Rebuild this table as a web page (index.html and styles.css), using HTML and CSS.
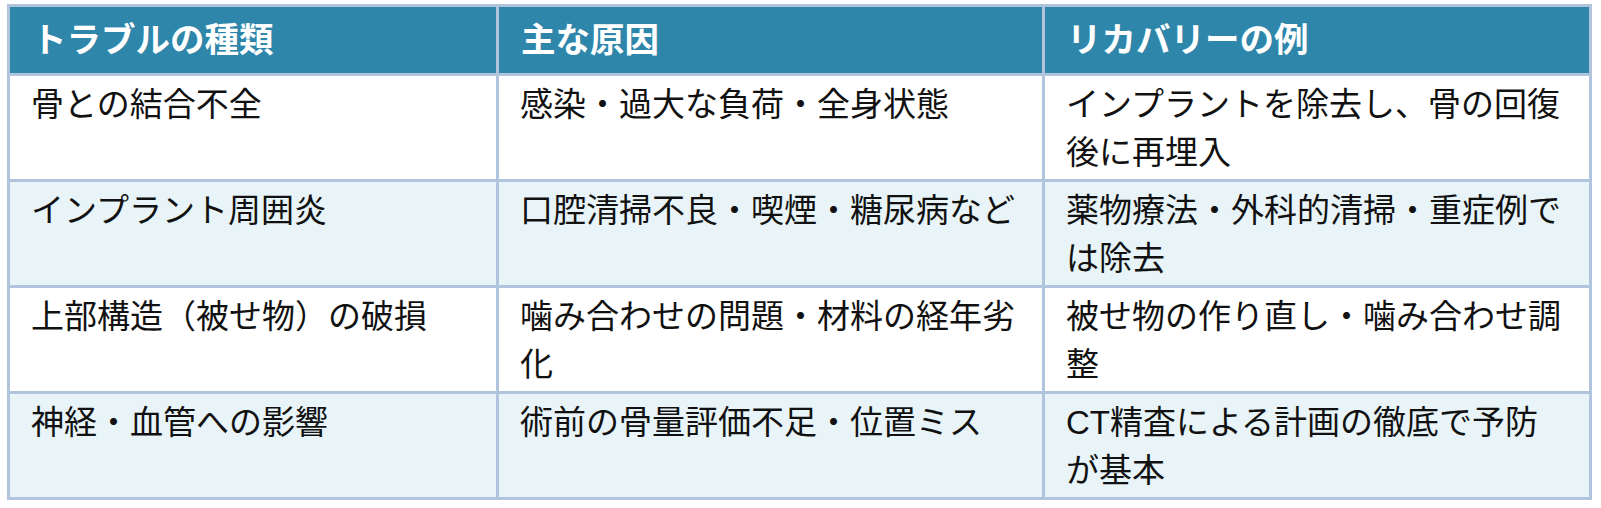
FILE: index.html
```html
<!DOCTYPE html>
<html lang="ja">
<head>
<meta charset="utf-8">
<title>インプラントのトラブル</title>
<link rel="stylesheet" href="styles.css">
</head>
<body>
<table class="trouble-table">
  <thead>
    <tr>
      <th class="col-type">トラブルの種類</th>
      <th class="col-cause">主な原因</th>
      <th class="col-recovery">リカバリーの例</th>
    </tr>
  </thead>
  <tbody>
    <tr>
      <td>骨との結合不全</td>
      <td>感染・過大な負荷・全身状態</td>
      <td>インプラントを除去し、骨の回復後に再埋入</td>
    </tr>
    <tr class="shaded">
      <td>インプラント周囲炎</td>
      <td>口腔清掃不良・喫煙・糖尿病など</td>
      <td>薬物療法・外科的清掃・重症例では除去</td>
    </tr>
    <tr>
      <td>上部構造（被せ物）の破損</td>
      <td>噛み合わせの問題・材料の経年劣化</td>
      <td>被せ物の作り直し・噛み合わせ調整</td>
    </tr>
    <tr class="shaded">
      <td>神経・血管への影響</td>
      <td>術前の骨量評価不足・位置ミス</td>
      <td>CT精査による計画の徹底で予防が基本</td>
    </tr>
  </tbody>
</table>
</body>
</html>
```
FILE: styles.css
```css
html, body {
  margin: 0;
  background: #ffffff;
}
body {
  padding: 4px 0 0 7px;
  font-family: "Liberation Sans", "Noto Sans CJK JP", sans-serif;
  font-size: 33px;
  line-height: 48px;
  color: #111111;
}
.trouble-table {
  width: 1585px;
  table-layout: fixed;
  border-collapse: separate;
  border-spacing: 0;
  border-top: 3px solid #b0c4de;
  border-left: 3px solid #b0c4de;
}
.trouble-table th,
.trouble-table td {
  box-sizing: border-box;
  border-right: 3px solid #b0c4de;
  border-bottom: 3px solid #b0c4de;
  text-align: left;
  vertical-align: top;
}
.trouble-table th {
  background: #2e86ab;
  color: #ffffff;
  font-size: 34.5px;
  font-weight: 700;
  padding: 9px 21px 9px 22px;
}
.trouble-table td {
  padding: 5px 21px 2px 21px;
  font-weight: 400;
}
.col-type { width: 489px; }
.col-cause { width: 546px; }
.col-recovery { width: 547px; }
.shaded td {
  background: #e8f4f8;
}
```
